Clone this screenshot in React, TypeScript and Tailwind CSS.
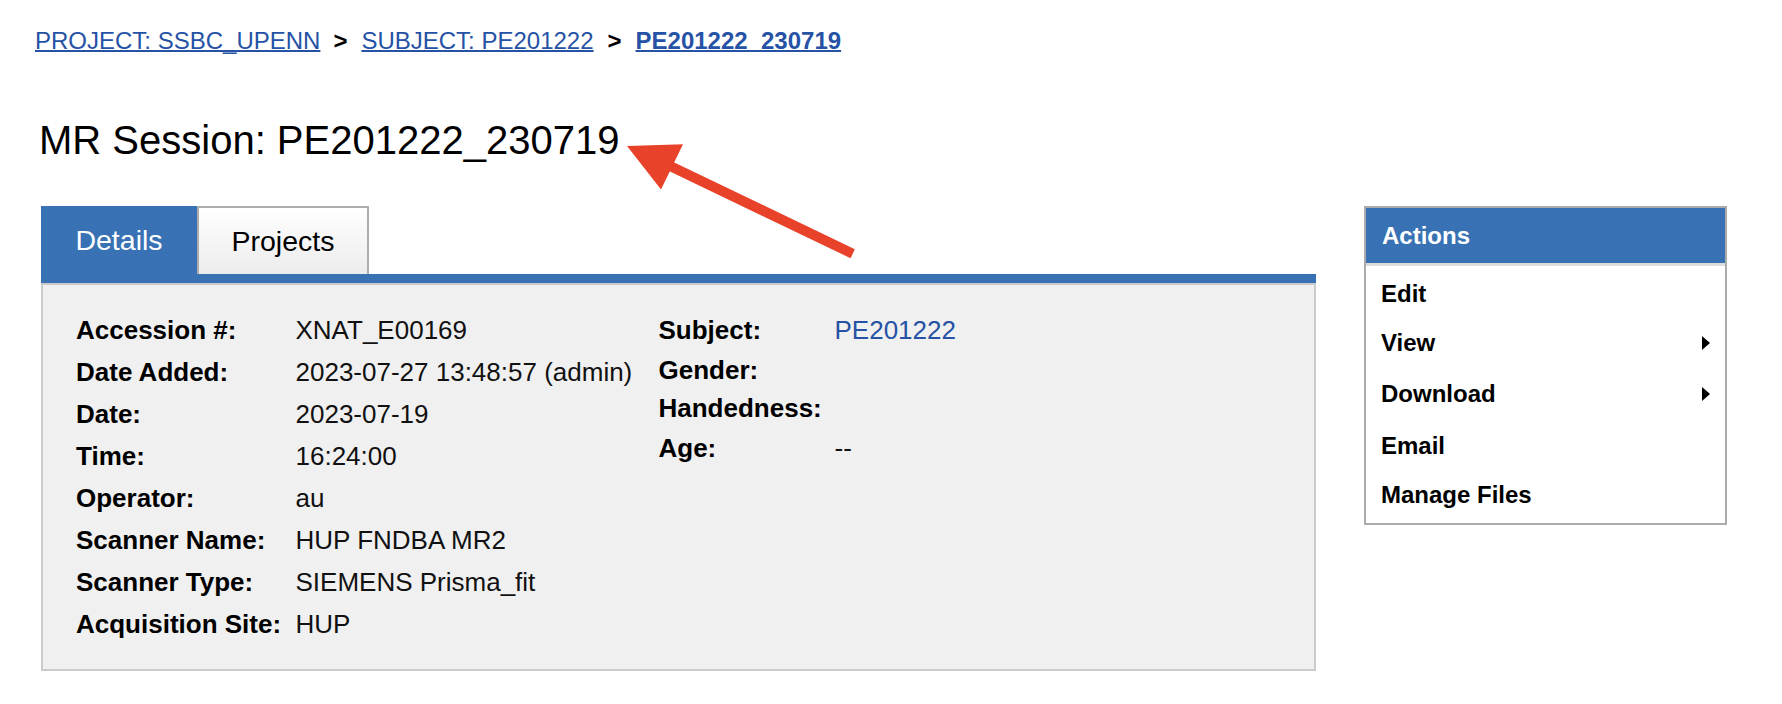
import React from "react";

const BLUE = "bg-[#3872b4]";

function LeftRow({ label, value }: { label: string; value: string }) {
  return (
    <div className="flex h-[42px]">
      <div className="w-[219.5px] font-bold whitespace-nowrap">{label}</div>
      <div className="w-[363px] whitespace-nowrap text-[#111]">{value}</div>
    </div>
  );
}

function RightRow({ label, value, h, link }: { label: string; value?: string; h: string; link?: boolean }) {
  return (
    <div className={`flex ${h}`}>
      <div className="w-[176px] font-bold whitespace-nowrap">{label}</div>
      <div className={`whitespace-nowrap ${link ? "text-[#2552a5]" : "text-[#111]"}`}>{value}</div>
    </div>
  );
}

function MenuItem({ label, h, arrow }: { label: string; h: string; arrow?: boolean }) {
  return (
    <div className={`flex items-center justify-between pl-[15px] pr-[15px] ${h}`}>
      <span>{label}</span>
      {arrow && (
        <span className="w-0 h-0 border-y-[7px] border-y-transparent border-l-[8px] border-l-black" />
      )}
    </div>
  );
}

export default function App() {
  return (
    <div className="relative w-full h-[704px] bg-white text-black overflow-hidden font-['Liberation_Sans',Arial,sans-serif]">
      {/* Breadcrumb */}
      <div className="pt-[27px] pl-[35px] flex items-baseline text-[24px] leading-[28px] whitespace-nowrap">
        <a className="text-[#2552a5] underline underline-offset-[1px] decoration-[2px]">PROJECT: SSBC_UPENN</a>
        <span className="font-bold ml-[13px] mr-[14px]">&gt;</span>
        <a className="text-[#2552a5] underline underline-offset-[1px] decoration-[2px]">SUBJECT: PE201222</a>
        <span className="font-bold ml-[14px] mr-[14px]">&gt;</span>
        <a className="text-[#2552a5] font-bold underline underline-offset-[1px] decoration-[2px]">PE201222_230719</a>
      </div>

      {/* Heading */}
      <h1 className="mt-[61.5px] ml-[39px] text-[40px] leading-[46px] font-normal whitespace-nowrap">
        MR Session: PE201222_230719
      </h1>

      {/* Main */}
      <div className="mt-[43.5px] ml-[41px] flex items-start">
        <div className="w-[1275px]">
          <div className="flex h-[68px]">
            <div className={`w-[156px] ${BLUE} text-white text-[28.5px] flex items-center justify-center`}>
              Details
            </div>
            <div className="w-[172px] border-2 border-b-0 border-[#adadad] bg-linear-to-b from-white to-[#ececec] text-[28.5px] flex items-center justify-center pt-[1px]">
              Projects
            </div>
          </div>
          <div className={`h-[9px] ${BLUE}`} />
          <div className="border-2 border-[#cbcbcb] bg-[#f0f0f0] pt-[24px] pb-[24px] pl-[33px] flex text-[26px] leading-[42px]">
            <div className="flex flex-col">
              <LeftRow label="Accession #:" value="XNAT_E00169" />
              <LeftRow label="Date Added:" value="2023-07-27 13:48:57 (admin)" />
              <LeftRow label="Date:" value="2023-07-19" />
              <LeftRow label="Time:" value="16:24:00" />
              <LeftRow label="Operator:" value="au" />
              <LeftRow label="Scanner Name:" value="HUP FNDBA MR2" />
              <LeftRow label="Scanner Type:" value="SIEMENS Prisma_fit" />
              <LeftRow label="Acquisition Site:" value="HUP" />
            </div>
            <div className="flex flex-col">
              <RightRow label="Subject:" value="PE201222" h="h-[40px]" link />
              <RightRow label="Gender:" h="h-[38px]" />
              <RightRow label="Handedness:" h="h-[40px]" />
              <RightRow label="Age:" value="--" h="h-[42px]" />
            </div>
          </div>
        </div>

        {/* Actions */}
        <div className="ml-[48px] w-[363px] border-2 border-[#ababab] bg-white text-[24px] font-bold">
          <div className={`h-[58px] ${BLUE} text-white flex items-center pl-[16px] border-b-[3px] border-b-[#dcdcdc]`}>
            Actions
          </div>
          <div className="pt-[4px] pb-[4px]">
            <MenuItem label="Edit" h="h-[48px]" />
            <MenuItem label="View" h="h-[50px]" arrow />
            <MenuItem label="Download" h="h-[52px]" arrow />
            <MenuItem label="Email" h="h-[51px]" />
            <MenuItem label="Manage Files" h="h-[48px]" />
          </div>
        </div>
      </div>

      {/* Annotation arrow */}
      <svg className="absolute left-0 top-0 pointer-events-none" width="1782" height="704">
        <line x1="852.7" y1="253.7" x2="668" y2="165" stroke="#e8432a" strokeWidth="10" />
        <polygon points="627,146 683,144.3 661,189.5" fill="#e8432a" />
      </svg>
    </div>
  );
}
